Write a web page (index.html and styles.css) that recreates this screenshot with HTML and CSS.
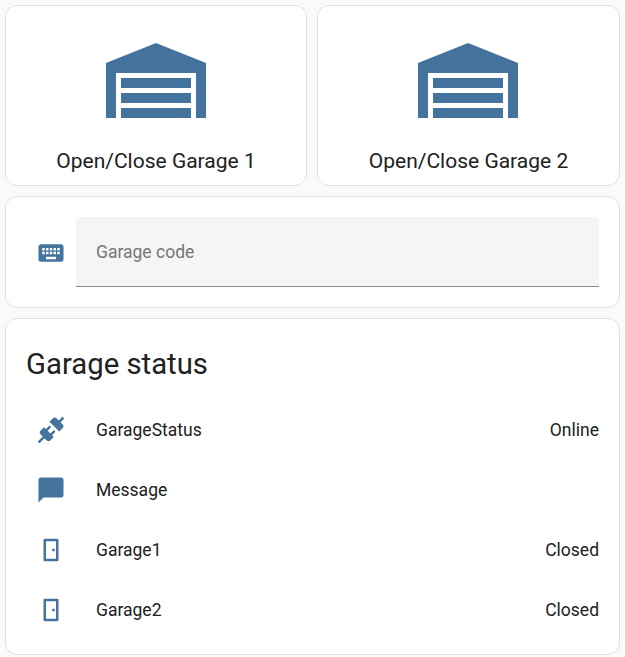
FILE: index.html
```html
<!DOCTYPE html>
<html lang="en">
<head>
    <meta charset="UTF-8">
    <meta name="viewport" content="width=device-width, initial-scale=1.0">
    <title>Garage</title>
    <link rel="stylesheet" href="styles.css">
</head>
<body>
    <div class="buttons">
        <div class="card button-card">
            <svg class="garage-icon" viewBox="0 0 24 24"><path d="M22,9V20H20V11H4V20H2V9L12,5L22,9M19,12H5V14H19V12M19,18H5V20H19V18M19,15H5V17H19V15Z"/></svg>
            <span class="button-name">Open/Close Garage 1</span>
        </div>
        <div class="card button-card">
            <svg class="garage-icon" viewBox="0 0 24 24"><path d="M22,9V20H20V11H4V20H2V9L12,5L22,9M19,12H5V14H19V12M19,18H5V20H19V18M19,15H5V17H19V15Z"/></svg>
            <span class="button-name">Open/Close Garage 2</span>
        </div>
    </div>

    <div class="card code-card">
        <svg class="icon" viewBox="0 0 24 24"><path d="M19,10H17V8H19M19,13H17V11H19M16,10H14V8H16M16,13H14V11H16M16,17H8V15H16M7,10H5V8H7M7,13H5V11H7M8,11H10V13H8M8,8H10V10H8M11,11H13V13H11M11,8H13V10H11M20,5H4C2.89,5 2,5.89 2,7V17A2,2 0 0,0 4,19H20A2,2 0 0,0 22,17V7C22,5.89 21.1,5 20,5Z"/></svg>
        <div class="code-field">Garage code</div>
    </div>

    <div class="card status-card">
        <h2>Garage status</h2>
        <div class="row">
            <svg class="icon" viewBox="0 0 24 24"><path d="M21.4 7.5C22.2 8.3 22.2 9.6 21.4 10.3L18.6 13.1L10.8 5.3L13.6 2.5C14.4 1.7 15.7 1.7 16.4 2.5L18.2 4.3L21.2 1.3L22.6 2.7L19.6 5.7L21.4 7.5M15.6 13.3L14.2 11.9L11.4 14.7L9.3 12.6L12.1 9.8L10.7 8.4L7.9 11.2L6.4 9.8L3.6 12.6C2.8 13.4 2.8 14.7 3.6 15.4L5.4 17.2L1.4 21.2L2.8 22.6L6.8 18.6L8.6 20.4C9.4 21.2 10.7 21.2 11.4 20.4L14.2 17.6L12.8 16.2L15.6 13.3Z"/></svg>
            <span class="row-name">GarageStatus</span>
            <span>Online</span>
        </div>
        <div class="row">
            <svg class="icon" viewBox="0 0 24 24"><path d="M20,2H4A2,2 0 0,0 2,4V22L6,18H20A2,2 0 0,0 22,16V4C22,2.89 21.1,2 20,2Z"/></svg>
            <span class="row-name">Message</span>
        </div>
        <div class="row">
            <svg class="icon" viewBox="0 0 24 24"><path d="M7,3C6.45,3 6,3.45 6,4V20C6,20.55 6.45,21 7,21H17C17.55,21 18,20.55 18,20V4C18,3.45 17.55,3 17,3H7M8,5H16V19H8V5M13,11V13H15V11H13Z"/></svg>
            <span class="row-name">Garage1</span>
            <span>Closed</span>
        </div>
        <div class="row">
            <svg class="icon" viewBox="0 0 24 24"><path d="M7,3C6.45,3 6,3.45 6,4V20C6,20.55 6.45,21 7,21H17C17.55,21 18,20.55 18,20V4C18,3.45 17.55,3 17,3H7M8,5H16V19H8V5M13,11V13H15V11H13Z"/></svg>
            <span class="row-name">Garage2</span>
            <span>Closed</span>
        </div>
    </div>
</body>
</html>
```
FILE: styles.css
```css
body {
    margin: 0;
    padding: 5px 5px 0;
    background-color: #fafafa;
    color: #212121;
    font-family: Roboto, sans-serif;
    font-size: 17.5px;
}
svg {
    fill: #44739e;
    display: block;
}
.card {
    background: white;
    border: 1px solid #e0e0e0;
    border-radius: 12px;
    box-sizing: border-box;
}
.buttons {
    display: grid;
    grid-template-columns: 302px 303px;
    gap: 10px;
    margin-bottom: 10px;
}
.button-card {
    height: 181px;
    display: flex;
    flex-direction: column;
    align-items: center;
    padding-top: 12px;
}
.garage-icon {
    width: 120px;
    height: 120px;
}
.button-card:last-child .garage-icon {
    margin-right: 1px;
}
.button-name {
    margin-top: 10px;
    font-size: 21px;
    line-height: 26px;
}
.icon {
    width: 30px;
    height: 30px;
    flex: none;
}
.code-card {
    height: 112px;
    display: flex;
    align-items: center;
    padding: 0 20px 0 30px;
    margin-bottom: 10px;
}
.code-card .icon {
    margin-top: 2px;
}
.code-field {
    flex: 1;
    height: 70px;
    margin-left: 10px;
    padding-left: 20px;
    box-sizing: border-box;
    background: #f5f5f5;
    border-bottom: 1px solid #8a8a8a;
    border-radius: 4px 4px 0 0;
    color: #757575;
    line-height: 71px;
}
.status-card {
    height: 337px;
    padding: 0 20px;
}
h2 {
    margin: 0 0 6px;
    padding-top: 25px;
    height: 50px;
    font-size: 29.3px;
    font-weight: 400;
    line-height: 40px;
}
.row {
    display: flex;
    align-items: center;
    height: 60px;
    padding-left: 10px;
}
.row-name {
    flex: 1;
    margin-left: 30px;
}
```
